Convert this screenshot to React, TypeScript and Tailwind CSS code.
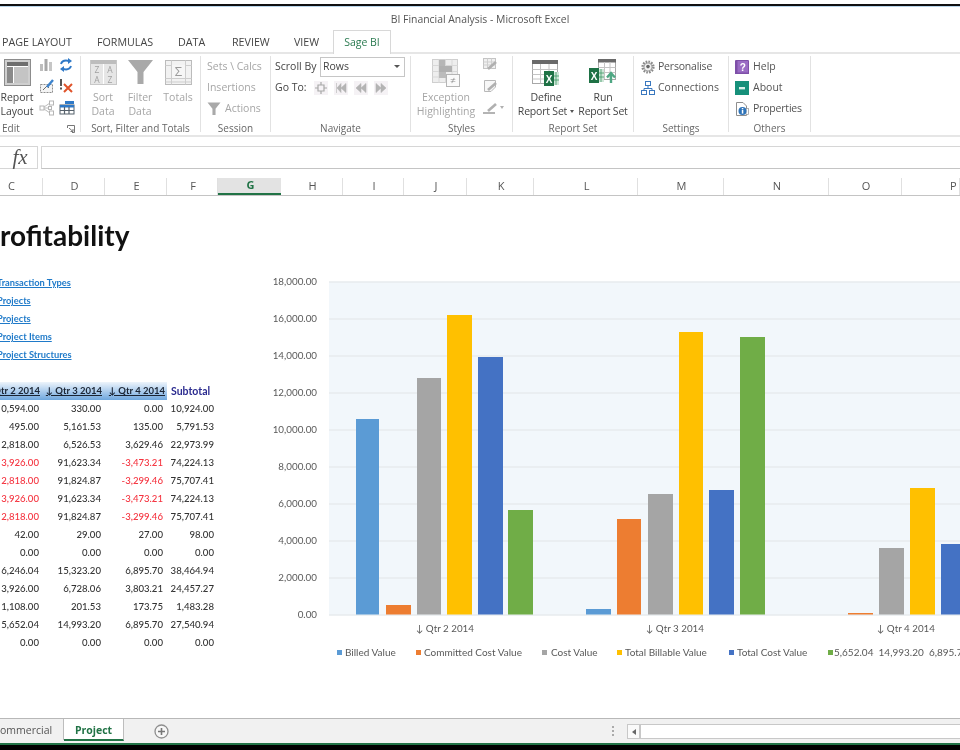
import React from "react";

function Group({ w, label, children, labelClass = "" }: { w: string; label: string; children: React.ReactNode; labelClass?: string }) {
  return (
    <div className={`${w} shrink-0 h-[76px] mt-[2px] border-r border-[#e2e2e2] flex flex-col relative`}>
      <div className="flex-1 flex min-h-0">{children}</div>
      <div className={`h-[14px] leading-[14px] text-center text-[10px] text-[#666] translate-y-[3px] ${labelClass}`}>{label}</div>
    </div>
  );
}

function Big({ icon, l1, l2, w, dim, extra, cls = "" }: { icon: React.ReactNode; l1: string; l2?: string; w: string; dim?: boolean; extra?: React.ReactNode; cls?: string }) {
  return (
    <div className={`${w} shrink-0 flex flex-col items-center pt-[3px] text-[10.5px] leading-[14px] whitespace-nowrap ${dim ? "text-[#a6a6a6]" : "text-[#444]"} ${cls}`}>
      <div className="h-[27px] mb-[4px] flex items-center">{icon}</div>
      <div>{l1}</div>
      {l2 && <div className="flex items-center">{l2}{extra}</div>}
    </div>
  );
}

function Row({ icon, text, dim, cls = "gap-[3px]" }: { icon?: React.ReactNode; text: string; dim?: boolean; cls?: string }) {
  return (
    <div className={`h-[21px] flex items-center text-[10.5px] whitespace-nowrap ${dim ? "text-[#a6a6a6]" : "text-[#555]"} ${cls}`}>
      {icon}
      <span>{text}</span>
    </div>
  );
}

const S = ({ s = 16, children, vb }: { s?: number; children: React.ReactNode; vb?: string }) => (
  <svg width={s} height={s} viewBox={vb ?? `0 0 ${s} ${s}`} className="shrink-0">{children}</svg>
);

const ReportLayoutIcon = () => (
  <S s={27}>
    <rect x="0.5" y="0.5" width="26" height="26" fill="#cfcfcf" stroke="#8c8c8c" />
    <rect x="3" y="3" width="21" height="21" fill="#fff" />
    <rect x="3" y="3" width="21" height="4" fill="#6e6e6e" />
    <rect x="3" y="8" width="6" height="16" fill="#8a8a8a" />
    <rect x="10" y="8" width="14" height="16" fill="#c4c4c4" />
  </S>
);

const SortIcon = () => (
  <S s={27}>
    <rect x="0.5" y="1.5" width="26" height="24" fill="#e6e6e6" stroke="#c8c8c8" />
    <rect x="1" y="1" width="25" height="4" fill="#bdbdbd" />
    <line x1="13.5" y1="5" x2="13.5" y2="25" stroke="#fff" />
    <text x="7" y="14" textAnchor="middle" fontSize="8.5" fill="#a0a0a0">Z</text>
    <text x="7" y="24" textAnchor="middle" fontSize="8.5" fill="#a0a0a0">A</text>
    <text x="20" y="14" textAnchor="middle" fontSize="8.5" fill="#a0a0a0">A</text>
    <text x="20" y="24" textAnchor="middle" fontSize="8.5" fill="#a0a0a0">Z</text>
  </S>
);

const FunnelIcon = ({ s = 27 }: { s?: number }) => (
  <svg width={s} height={s} viewBox="0 0 27 27" className="shrink-0">
    <polygon points="1,1 26,1 16.5,13 16.5,25 10.5,25 10.5,13" fill="#a9a9a9" />
  </svg>
);

const SumIcon = () => (
  <S s={27}>
    <rect x="0.5" y="1.5" width="26" height="24" fill="#f2f2f2" stroke="#bbbbbb" />
    <path d="M0.5 6.5H26.5M0.5 19.5H26.5M0.5 23H26.5M6.5 1.5V25.5M20.5 1.5V25.5" stroke="#cdcdcd" fill="none" />
    <rect x="7" y="6" width="13" height="13" fill="#f6f6f6" />
    <text x="13.5" y="17" textAnchor="middle" fontSize="13" fill="#9a9a9a">Σ</text>
  </S>
);

const ExceptionIcon = () => (
  <S s={28}>
    <rect x="0.5" y="0.5" width="25" height="23" fill="#eeeeee" stroke="#cfcfcf" />
    <path d="M0.5 6.5H25.5M0.5 12.5H25.5M0.5 18H25.5M7 0.5V24M13.5 0.5V24M20 0.5V24" stroke="#d8d8d8" fill="none" />
    <rect x="7" y="1" width="6" height="6" fill="#b6b6b6" />
    <rect x="7" y="7" width="13" height="6" fill="#b0b0b0" />
    <rect x="7" y="13" width="7" height="6" fill="#bcbcbc" />
    <rect x="14.5" y="15.5" width="13" height="12" fill="#fafafa" stroke="#b5b5b5" />
    <text x="21" y="25" textAnchor="middle" fontSize="10" fill="#8f8f8f">≠</text>
  </S>
);

const ExcelBadge = ({ x, y }: { x: number; y: number }) => (
  <g transform={`translate(${x} ${y})`}>
    <rect x="6" y="1" width="9" height="13" fill="#cfe6d8" />
    <path d="M9 1V14M12 1V14M6 5H15M6 9H15" stroke="#3f9a68" strokeWidth="0.8" />
    <rect x="0" y="0" width="10" height="15" fill="#1e7145" />
    <text x="5" y="11.5" textAnchor="middle" fontSize="10" fontWeight="700" fill="#fff" fontFamily="Liberation Sans, sans-serif">X</text>
  </g>
);

const DefineIcon = () => (
  <S s={28}>
    <rect x="0.5" y="1.5" width="25" height="23" fill="#fff" stroke="#a8a8a8" />
    <rect x="0" y="1" width="26" height="4" fill="#6a6a6a" />
    <path d="M0.5 10.5H25.5M0.5 15.5H25.5M0.5 20H25.5M8.5 5V24.5M17 5V24.5" stroke="#c4c4c4" fill="none" />
    <ExcelBadge x={12} y={12} />
  </S>
);

const RunIcon = () => (
  <S s={30}>
    <rect x="10.5" y="1.5" width="17" height="20" fill="#fff" stroke="#a8a8a8" />
    <rect x="10" y="1" width="18" height="3.5" fill="#6a6a6a" />
    <path d="M10.5 9.5H27.5M10.5 14.5H27.5M16.5 4V21M22 4V21" stroke="#c4c4c4" fill="none" />
    <ExcelBadge x={1} y={10} />
    <path d="M23 25V16M19 19.5L23 15L27 19.5" stroke="#4fa783" strokeWidth="2.4" fill="none" />
  </S>
);

const Bars = () => (
  <S s={14}>
    <rect x="1" y="6" width="3" height="7" fill="#bdbdbd" />
    <rect x="5.5" y="1" width="3" height="12" fill="#a8a8a8" />
    <rect x="10" y="4" width="3" height="9" fill="#c6c6c6" />
  </S>
);
const Refresh = () => (
  <S s={14}>
    <path d="M2 6C3 3 6 2 10 3" stroke="#2f79c7" strokeWidth="2" fill="none" />
    <polygon points="9,0 13,3 9,6" fill="#2f79c7" />
    <path d="M12 8C11 11 8 12 4 11" stroke="#2f79c7" strokeWidth="2" fill="none" />
    <polygon points="5,8 1,11 5,14" fill="#2f79c7" />
  </S>
);
const Pencil = () => (
  <S s={16}>
    <rect x="1.5" y="6.5" width="12" height="8" fill="#f4f4f4" stroke="#8d8d8d" strokeDasharray="2 1" />
    <path d="M4 12L8 8L10 10" stroke="#6d6d6d" fill="none" />
    <path d="M8 9L14 2" stroke="#3d83cc" strokeWidth="2.4" />
  </S>
);
const RedX = () => (
  <S s={14}>
    <rect x="1" y="0" width="2" height="7" fill="#555" />
    <rect x="1" y="8.5" width="2" height="2" fill="#555" />
    <path d="M5 5L13 13M13 5L5 13" stroke="#e0532a" strokeWidth="2" />
  </S>
);
const Nodes = () => (
  <S s={16}>
    <path d="M3.5 8L11 3M3.5 8L11 13M11 8H3.5" stroke="#bcbcbc" fill="none" />
    <rect x="1" y="6" width="4" height="4" fill="#fff" stroke="#b5b5b5" />
    <rect x="10.5" y="1" width="4" height="4" fill="#fff" stroke="#b5b5b5" />
    <rect x="10.5" y="11" width="4" height="4" fill="#fff" stroke="#b5b5b5" />
    <rect x="9.5" y="6.5" width="3" height="3" fill="#fff" stroke="#b5b5b5" />
  </S>
);
const TableBlue = () => (
  <S s={16}>
    <rect x="6" y="1" width="9" height="3" fill="#2f79c7" />
    <rect x="1" y="5" width="14" height="9" fill="#fff" stroke="#55606b" />
    <rect x="1" y="5" width="14" height="2.5" fill="#2f79c7" />
    <path d="M5.5 7V14M10 7V14M1 10.5H15" stroke="#55606b" strokeWidth="1.2" />
  </S>
);
const Smudge = ({ kind }: { kind: number }) => (
  <S s={16}>
    {kind === 0 && (
      <>
        <rect x="1.5" y="1.5" width="12" height="10" fill="#f0f0f0" stroke="#c4c4c4" />
        <path d="M1.5 5H13.5M1.5 8H13.5M5.5 1.5V11.5M9.5 1.5V11.5" stroke="#cfcfcf" />
      </>
    )}
    {kind === 1 && <path d="M2.5 2.5H13.5V9L9 13.5H2.5Z" fill="#f7f7f7" stroke="#b8b8b8" />}
    {kind === 2 && <rect x="1" y="13" width="12" height="2" fill="#b4b4b4" />}
    <path d="M6 12L14 5" stroke="#b0b0b0" strokeWidth="2.6" />
  </S>
);
const Gear = () => (
  <S s={14}>
    <circle cx="7" cy="7" r="5.4" fill="#e8e8e8" stroke="#8a8a8a" strokeWidth="2.4" strokeDasharray="1.6 1.2" />
    <circle cx="7" cy="7" r="4" fill="#f0f0f0" stroke="#8a8a8a" strokeWidth="0.7" />
    <circle cx="7" cy="6.6" r="1.8" fill="#666" />
  </S>
);
const Conn = () => (
  <S s={14}>
    <rect x="4.5" y="0.5" width="5" height="4" fill="#fff" stroke="#3a78bf" />
    <rect x="0.5" y="9.5" width="5" height="4" fill="#fff" stroke="#3a78bf" />
    <rect x="8.5" y="9.5" width="5" height="4" fill="#fff" stroke="#3a78bf" />
    <path d="M7 4.5V7.5M3 9.5V7.5H11V9.5" stroke="#3a78bf" fill="none" />
  </S>
);
const HelpI = () => (
  <S s={14}>
    <rect x="0" y="0" width="14" height="15" rx="1" fill="#7e4fa8" />
    <rect x="2.5" y="1" width="10.5" height="11.5" fill="#9a6cc4" />
    <text x="7.8" y="10.5" textAnchor="middle" fontSize="10" fontWeight="700" fill="#fff" fontFamily="Liberation Sans, sans-serif">?</text>
  </S>
);
const AboutI = () => (
  <S s={14}>
    <rect x="0" y="0" width="14" height="14" fill="#16907a" />
    <rect x="4" y="6" width="6" height="2.4" fill="#d9f0ea" />
  </S>
);
const PropI = () => (
  <S s={14}>
    <path d="M1.5 0.5H8L11.5 4V13.5H1.5Z" fill="#fff" stroke="#8e8e8e" />
    <rect x="11" y="6.5" width="2.5" height="6" fill="#fff" stroke="#8e8e8e" strokeWidth="0.7" />
    <circle cx="7.5" cy="9" r="4" fill="#2e73b8" />
    <rect x="6.8" y="8" width="1.5" height="3.6" fill="#fff" />
    <rect x="6.8" y="6" width="1.5" height="1.3" fill="#fff" />
  </S>
);
const Nav = ({ d, open }: { d: string; open?: boolean }) => (
  <S s={14}>
    <rect width="14" height="14" fill="#f5f2f5" />
    <path d={d} fill={open ? "none" : "#b4b4b4"} stroke={open ? "#a8a8a8" : "#b4b4b4"} strokeWidth={open ? 1.2 : 0.6} />
  </S>
);

const rows: [string, string, string, string, boolean?, boolean?][] = [
  ["0,594.00", "330.00", "0.00", "10,924.00"],
  ["495.00", "5,161.53", "135.00", "5,791.53"],
  ["2,818.00", "6,526.53", "3,629.46", "22,973.99"],
  ["3,926.00", "91,623.34", "-3,473.21", "74,224.13", true, true],
  ["2,818.00", "91,824.87", "-3,299.46", "75,707.41", true, true],
  ["3,926.00", "91,623.34", "-3,473.21", "74,224.13", true, true],
  ["2,818.00", "91,824.87", "-3,299.46", "75,707.41", true, true],
  ["42.00", "29.00", "27.00", "98.00"],
  ["0.00", "0.00", "0.00", "0.00"],
  ["6,246.04", "15,323.20", "6,895.70", "38,464.94"],
  ["3,926.00", "6,728.06", "3,803.21", "24,457.27"],
  ["1,108.00", "201.53", "173.75", "1,483.28"],
  ["5,652.04", "14,993.20", "6,895.70", "27,540.94"],
  ["0.00", "0.00", "0.00", "0.00"],
];

const cols: [string, string, string][] = [
  ["C", "w-[43px]", "pr-[19px] justify-center"],
  ["D", "w-[62px]", "pl-[2px] justify-center"],
  ["E", "w-[62px]", "pl-[2px] justify-center"],
  ["F", "w-[51px]", "pl-[2px] justify-center"],
  ["G", "w-[63px]", "pl-[2px] justify-center"],
  ["H", "w-[62px]", "pl-[2px] justify-center"],
  ["I", "w-[61px]", "pl-[2px] justify-center"],
  ["J", "w-[63px]", "pl-[2px] justify-center"],
  ["K", "w-[67px]", "pl-[2px] justify-center"],
  ["L", "w-[104px]", "pl-[2px] justify-center"],
  ["M", "w-[86px]", "pl-[2px] justify-center"],
  ["N", "w-[105px]", "pl-[2px] justify-center"],
  ["O", "w-[73px]", "pl-[2px] justify-center"],
  ["P", "w-[58px]", "pl-[48px]"],
];

const bars: [number, number, number, string][] = [
  [356, 379, 419, "#5b9bd5"],
  [386, 411, 605, "#ed7d31"],
  [417, 441, 378, "#a5a5a5"],
  [447, 472, 315, "#ffc000"],
  [478, 503, 357, "#4472c4"],
  [508, 533, 510, "#70ad47"],
  [586, 611, 609, "#5b9bd5"],
  [617, 641, 519, "#ed7d31"],
  [648, 673, 494, "#a5a5a5"],
  [679, 703, 332, "#ffc000"],
  [709, 734, 490, "#4472c4"],
  [740, 765, 337, "#70ad47"],
  [848, 873, 613, "#ed7d31"],
  [879, 904, 548, "#a5a5a5"],
  [910, 935, 488, "#ffc000"],
  [941, 966, 544, "#4472c4"],
];

const legend: [number, number, string, string][] = [
  [337, 345, "#5b9bd5", "Billed Value"],
  [416, 424, "#ed7d31", "Committed Cost Value"],
  [542, 551, "#a5a5a5", "Cost Value"],
  [617, 625, "#ffc000", "Total Billable Value"],
  [729, 737, "#4472c4", "Total Cost Value"],
  [828, 834, "#70ad47", "5,652.04  14,993.20  6,895.70"],
];

function Chart() {
  const ticks = [0, 1, 2, 3, 4, 5, 6, 7, 8, 9];
  return (
    <svg width="692" height="522" viewBox="268 196 692 522" className="shrink-0" style={{ fontFamily: "Lato, sans-serif" }}>
      <rect x="329" y="282" width="640" height="333" fill="#f2f7fb" />
      {ticks.map((t) => {
        const y = 615 - t * 37;
        return (
          <g key={t}>
            <line x1="329" x2="960" y1={y} y2={y} stroke="#e7ebee" strokeWidth="1.6" />
            <text x="317" y={y + 3} textAnchor="end" fontSize="9.8" fill="#595959">
              {(t * 2000).toLocaleString("en-US", { minimumFractionDigits: 2 })}
            </text>
          </g>
        );
      })}
      {bars.map(([a, b, top, c], i) => (
        <rect key={i} x={a} y={top} width={b - a} height={614.5 - top} fill={c} />
      ))}
      {[["Qtr 2 2014", 416], ["Qtr 3 2014", 646], ["Qtr 4 2014", 877]].map(([t, x]) => (
        <text key={t as string} x={x as number} y={632} fontSize="9.8" fill="#595959" xmlSpace="preserve">{`↓ ${t}`}</text>
      ))}
      {legend.map(([sx, tx, c, t]) => (
        <g key={t}>
          <rect x={sx} y={650} width={5} height={5} fill={c} />
          <text x={tx} y={656} fontSize="10" fill="#595959" xmlSpace="preserve">{t}</text>
        </g>
      ))}
    </svg>
  );
}

export default function App() {
  return (
    <div className="w-[960px] h-[750px] overflow-hidden flex flex-col bg-white blur-[0.45px]" style={{ fontFamily: '"Open Sans", "Noto Sans", sans-serif' }}>
      <div className="h-[4px] shrink-0" />
      <div className="h-[2px] shrink-0 bg-[#111]" />
      <div className="h-[1px] shrink-0 bg-[#b9d5ea]" />
      {/* title */}
      <div className="h-[23px] shrink-0 flex items-center justify-center pt-[2px] text-[10.4px] text-[#555]">
        <span>BI Financial Analysis - Microsoft Excel</span>
      </div>
      {/* tabs */}
      <div className="h-[24px] shrink-0 flex text-[10.7px] text-[#444] border-b-2 border-[#e6e6e6] whitespace-nowrap">
        <div className="w-[97px] pl-[2px] leading-[24px]">PAGE LAYOUT</div>
        <div className="w-[81px] leading-[24px]">FORMULAS</div>
        <div className="w-[54px] leading-[24px]">DATA</div>
        <div className="w-[62px] leading-[24px]">REVIEW</div>
        <div className="w-[39px] leading-[24px]">VIEW</div>
        <div className="w-[58px] h-[24px] bg-white border border-b-0 border-[#d8d8d8] text-center leading-[23px] text-[10.5px] text-[#2a7a50]">Sage BI</div>
      </div>
      {/* ribbon */}
      <div className="h-[83px] shrink-0 flex border-b-2 border-[#e6e6e6]">
        <Group w="w-[81px]" label="Edit" labelClass="text-left pl-[2px]">
          <Big w="w-[34px]" icon={<ReportLayoutIcon />} l1="Report" l2="Layout" />
          <div className="flex gap-[4px] pl-[5px] pt-[2px]">
            <div className="flex flex-col gap-[6px]"><Bars /><Pencil /><Nodes /></div>
            <div className="flex flex-col gap-[7px]"><Refresh /><RedX /><TableBlue /></div>
          </div>
          <svg width="8" height="8" viewBox="0 0 8 8" className="absolute right-[5px] bottom-[-1px]">
            <path d="M0.5 3V0.5H7.5V7.5H5M2 3L6 6.5M6 4V6.5H3.5" stroke="#777" fill="none" />
          </svg>
        </Group>
        <Group w="w-[120px]" label="Sort, Filter and Totals">
          <Big dim w="w-[44px]" icon={<SortIcon />} l1="Sort" l2="Data" />
          <Big dim w="w-[30px]" icon={<FunnelIcon />} l1="Filter" l2="Data" />
          <Big dim w="w-[46px]" icon={<SumIcon />} l1="Totals" />
        </Group>
        <Group w="w-[70px]" label="Session">
          <div className="pl-[6px]">
            <Row dim text="Sets \ Calcs" />
            <Row dim text="Insertions" />
            <Row dim cls="gap-[4px]" icon={<FunnelIcon s={14} />} text="Actions" />
          </div>
        </Group>
        <Group w="w-[140px]" label="Navigate">
          <div className="pl-[4px] w-full">
            <div className="h-[21px] flex items-center text-[10.5px] text-[#444]">
              <span className="w-[45px]">Scroll By</span>
              <div className="w-[85px] h-[20px] border border-[#c6c6c6] flex items-center justify-between px-[2px] text-[#444]">
                <span>Rows</span>
                <span className="w-0 h-0 border-x-[3px] border-x-transparent border-t-[3px] border-t-[#555] mr-[2px]" />
              </div>
            </div>
            <div className="h-[21px] flex items-center text-[10.5px] text-[#444]">
              <span className="w-[39px]">Go To:</span>
              <div className="flex gap-[6px]">
                <Nav open d="M7 1V4M7 10V13M1 7H4M10 7H13M4 4H10V10H4Z" />
                <Nav d="M2.5 2V12M12 2.5L7 7L12 11.5ZM7 2.5L3 7L7 11.5Z" />
                <Nav d="M12 2.5L7 7L12 11.5ZM7 2.5L2 7L7 11.5Z" />
                <Nav d="M2 2.5L7 7L2 11.5ZM7 2.5L12 7L7 11.5Z" />
              </div>
            </div>
          </div>
        </Group>
        <Group w="w-[102px]" label="Styles">
          <Big dim w="w-[70px]" icon={<ExceptionIcon />} l1="Exception" l2="Highlighting" />
          <div className="flex flex-col gap-[5px] pt-[1px] pl-[1px]">
            <Smudge kind={0} />
            <Smudge kind={1} />
            <div className="flex items-center gap-[2px]">
              <Smudge kind={2} />
              <span className="w-0 h-0 border-x-[2.5px] border-x-transparent border-t-[3px] border-t-[#b0b0b0]" />
            </div>
          </div>
        </Group>
        <Group w="w-[121px]" label="Report Set">
          <Big
            w="w-[66px]"
            cls="tracking-[-0.2px]"
            icon={<DefineIcon />}
            l1="Define"
            l2="Report Set"
            extra={<span className="ml-[3px] w-0 h-0 border-x-[2.5px] border-x-transparent border-t-[3px] border-t-[#555]" />}
          />
          <Big w="w-[48px]" cls="tracking-[-0.2px]" icon={<RunIcon />} l1="Run" l2="Report Set" />
        </Group>
        <Group w="w-[95px]" label="Settings">
          <div className="pl-[7px]">
            <Row cls="gap-[3px] tracking-[-0.2px]" icon={<Gear />} text="Personalise" />
            <Row icon={<Conn />} text="Connections" />
          </div>
        </Group>
        <Group w="w-[82px]" label="Others">
          <div className="pl-[6px]">
            <Row cls="gap-[4px]" icon={<HelpI />} text="Help" />
            <Row cls="gap-[4px]" icon={<AboutI />} text="About" />
            <Row cls="gap-[4px] tracking-[-0.2px]" icon={<PropI />} text="Properties" />
          </div>
        </Group>
      </div>
      {/* formula bar */}
      <div className="h-[9px] shrink-0" />
      <div className="h-[23px] shrink-0 flex gap-[3px]">
        <div className="w-[38px] border border-l-0 border-[#d6d6d6] flex items-center justify-center pl-[3px] text-[21px] italic text-[#555]" style={{ fontFamily: '"Liberation Serif", serif' }}>
          fx
        </div>
        <div className="flex-1 border border-r-0 border-[#d6d6d6] border-b-[#c4c4c4]" />
      </div>
      <div className="h-[9px] shrink-0" />
      {/* column headers */}
      <div className="h-[18px] shrink-0 flex border-b border-[#c4c4c4] text-[11px] text-[#555] overflow-hidden">
        {cols.map(([c, w, cls]) => (
          <div
            key={c}
            className={
              c === "G"
                ? `${w} shrink-0 flex items-center ${cls} bg-[#e3e3e3] font-bold text-[#217346] border-b-2 border-[#217346]`
                : `${w} shrink-0 flex items-center ${cls} border-r border-[#e0e0e0]`
            }
          >
            {c}
          </div>
        ))}
      </div>
      {/* sheet */}
      <div className="flex-1 flex min-h-0" style={{ fontFamily: "Lato, sans-serif" }}>
        <div className="w-[268px] shrink-0 overflow-hidden pt-[21px]">
          <div className="h-[36px] leading-[36px] text-[28px] font-bold text-[#111] whitespace-nowrap">rofitability</div>
          <div className="mt-[21px] text-[9.3px] font-bold text-[#1f7ac9] underline whitespace-nowrap">
            {["Transaction Types", "Projects", "Projects", "Project Items", "Project Structures"].map((l, i) => (
              <div key={i} className="h-[18px] leading-[18px] ml-[-3px]">{l}</div>
            ))}
          </div>
          <div className="mt-[18px] w-[214px] flex h-[18px] text-[9.5px] font-bold">
            <div className="w-[167px] grid grid-cols-[40px_62px_63px] bg-gradient-to-b from-[#edf4fb] to-[#6ea7de] text-[#1a2433] underline whitespace-nowrap overflow-hidden">
              <div className="text-right leading-[18px] flex justify-end">Qtr 2 2014</div>
              <div className="text-right leading-[18px]">↓ Qtr 3 2014</div>
              <div className="text-right leading-[18px]">↓ Qtr 4 2014</div>
            </div>
            <div className="flex-1 pl-[4px] text-left text-[10.5px] leading-[18px] text-[#2b2b8f]">Subtotal</div>
          </div>
          <div className="w-[214px] text-[9.6px] text-[#333] font-medium">
            {rows.map((r, i) => (
              <div key={i} className="grid grid-cols-[39px_62px_62px_51px] h-[18px] leading-[18px] text-right whitespace-nowrap">
                <div className={r[4] ? "text-[#f5333f]" : ""}>{r[0]}</div>
                <div>{r[1]}</div>
                <div className={r[5] ? "text-[#f5333f]" : ""}>{r[2]}</div>
                <div>{r[3]}</div>
              </div>
            ))}
          </div>
        </div>
        <Chart />
      </div>
      {/* sheet tabs */}
      <div className="h-[25px] shrink-0 flex bg-[#f1f1f1] border-t border-[#b8b8b8] text-[10.5px]">
        <div className="w-[64px] h-[21px] border-r border-[#bdbdbd] text-right pr-[11px] leading-[23px] text-[#555] overflow-hidden whitespace-nowrap">ommercial</div>
        <div className="w-[60px] h-[22px] bg-white border-r border-[#bdbdbd] border-b-2 border-b-[#217346] text-center leading-[22px] font-bold text-[#217346]">Project</div>
        <div className="w-[489px] pl-[30px] pt-[5px]">
          <svg width="15" height="15" viewBox="0 0 15 15">
            <circle cx="7.5" cy="7.5" r="6.5" fill="#f7f7f7" stroke="#8f8f8f" strokeWidth="1.3" />
            <path d="M7.5 4V11M4 7.5H11" stroke="#777" strokeWidth="1.6" />
          </svg>
        </div>
        <div className="w-[15px] pt-[7px] flex flex-col items-start gap-[2px] ml-[-1px]">
          <span className="w-[2px] h-[2px] bg-[#aaa]" />
          <span className="w-[2px] h-[2px] bg-[#aaa]" />
          <span className="w-[2px] h-[2px] bg-[#aaa]" />
        </div>
        <div className="flex-1 h-[15px] mt-[5px] border border-r-0 border-[#c8c8c8] flex bg-white">
          <div className="w-[13px] border-r-2 border-[#c8c8c8] flex items-center justify-center bg-[#fafafa]">
            <span className="w-0 h-0 border-y-[3.5px] border-y-transparent border-r-[4px] border-r-[#666]" />
          </div>
        </div>
      </div>
      <div className="h-[2px] shrink-0 bg-[#217346]" />
      <div className="h-[5px] shrink-0 bg-black" />
    </div>
  );
}
